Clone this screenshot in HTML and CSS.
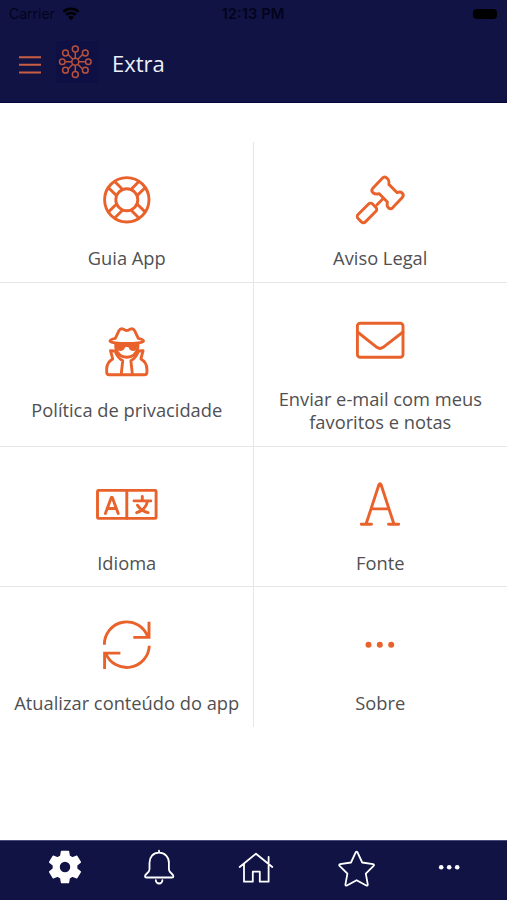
FILE: index.html
```html
<!DOCTYPE html>
<html lang="pt">
  <head>
    <meta charset="UTF-8" />
    <meta name="viewport" content="width=device-width, initial-scale=1.0" />
    <title>Extra</title>
    <link rel="stylesheet" href="styles.css">
  </head>
  <body>
    <header class="header">
      <div class="status">
        <div class="carrier">
          <span>Carrier</span>
          <svg width="18" height="14" viewBox="0 0 18 14">
            <path d="M1.5 4.8a11 11 0 0 1 15 0M4.2 7.9a7 7 0 0 1 9.6 0" fill="none" stroke="#000" stroke-width="2.5" />
            <path d="M9 13.2L6.2 10.2a4 4 0 0 1 5.6 0z" />
          </svg>
        </div>
        <div class="time">12:13 PM</div>
        <div class="battery"><i></i></div>
      </div>
      <div class="title-bar">
        <svg class="menu-icon" width="22" height="20" viewBox="0 0 22 20">
          <path d="M0 2.3h22M0 9.8h22M0 17.4h22" />
        </svg>
        <svg class="logo" width="42" height="42" viewBox="0 0 42 42">
          <rect width="42" height="42" fill="#0e1043" />
          <g class="logo-lines">
            <circle cx="19.3" cy="20.7" r="3.5" />
            <path d="M19.3 17.2v-6M19.3 24.2v6M15.8 20.7h-6M22.8 20.7h6M16.8 18.2l-5-5M21.8 18.2l5-5M16.8 23.2l-5 5M21.8 23.2l5 5" />
            <circle cx="19.3" cy="8" r="3" />
            <circle cx="19.3" cy="33.4" r="3" />
            <circle cx="6.3" cy="20.7" r="2.8" />
            <circle cx="32.3" cy="20.7" r="2.8" />
            <circle cx="9.5" cy="12" r="2.9" />
            <circle cx="29.3" cy="12" r="2.9" />
            <circle cx="9.5" cy="29.2" r="2.9" />
            <circle cx="29.3" cy="29.2" r="2.9" />
          </g>
        </svg>
        <h1>Extra</h1>
      </div>
    </header>

    <main class="content">
      <div class="grid">
        <div class="item">
          <svg class="icon" viewBox="0 0 64 64">
            <circle cx="31.8" cy="31.8" r="22.2" />
            <circle cx="31.8" cy="31.8" r="11" />
            <path d="M21.3 27.4L14 20.2M27.4 21.3L20.2 14M36.2 21.3l7.2-7.3M42.3 27.4l7.3-7.2M42.3 36.2l7.3 7.2M36.2 42.3l7.2 7.3M27.4 42.3L20.2 49.6M21.3 36.2l-7.3 7.2" />
          </svg>
          <p>Guia App</p>
        </div>
        <div class="item">
          <svg class="icon" viewBox="0 0 64 64">
            <path d="M24.6 20.6L34.3 10.2Q36.7 7.7 39 10.2L40.1 11.3Q41.5 13 40.9 16.4L49.2 24.7Q52.3 23.3 54.2 25.1Q56.3 27.3 54.3 29.5L44.8 39.6Q42.5 41.8 40.3 39.6Q38.4 37.5 39.4 34.1L31 25.6Q27.5 26.7 25.2 25Q22.8 22.8 24.6 20.6z" />
            <path d="M35 30.7l-6 6" />
            <rect x="-9.7" y="-5.2" width="20.5" height="10.4" rx="2.8" transform="translate(18.6 45.3) rotate(-45)" />
          </svg>
          <p>Aviso Legal</p>
        </div>
        <div class="item">
          <svg class="icon" viewBox="0 0 64 64">
            <path d="M20.3 18.3L24 10.6Q25.5 8 28 9L30 10.1Q31.8 10.8 33.6 10.1L35.6 9Q38.1 8 39.6 10.6L43.3 18.3Q48.5 19.5 48.5 21C48.5 24.4 15 24.4 15 21Q15 19.5 20.3 18.3z" />
            <path d="M20.8 24v3.8c1.5 6.3 6 9.4 11 9.4s9.5-3.1 11-9.4V24" />
            <path class="fill" d="M21 23c6 1.3 15.6 1.3 21.6 0l-1.1 5.4c-.6 3.4-6.2 3.4-7.5-.2l-.8-1.2h-2.8l-.8 1.2c-1.3 3.6-6.9 3.6-7.5.2z" />
            <path d="M20.2 31l-4.7-.3 2.2 8.2c-4 2.2-6 5.8-6 10.2v3.1q0 2.5 2.5 2.5h35.2q2.5 0 2.5-2.5v-3.1c0-4.4-2-8-6-10.2l2.2-8.2-4.7.3c-1.2 4.8-4.3 7.8-7.5 9.8l1.5 13.6M20.2 31c1.2 4.8 4.3 7.8 7.5 9.8l-1.5 13.6" />
          </svg>
          <p>Política de privacidade</p>
        </div>
        <div class="item">
          <svg class="icon" viewBox="0 0 64 64">
            <rect x="9.4" y="14.3" width="45.6" height="34" rx="2.8" />
            <path d="M9.5 23l19.4 15.3q3.1 2.2 6.2 0L55 23" />
          </svg>
          <p>Enviar e-mail com meus favoritos e notas</p>
        </div>
        <div class="item">
          <svg class="icon" viewBox="0 0 64 64">
            <rect x="2.5" y="17.4" width="58.6" height="28" rx="1" />
            <path d="M31.8 17.4v28M10.4 40.5l5.9-16h1l5.9 16M12.3 35.5h9M39 27.9h16.8M47.3 23.5v4M52.3 28.7c-1 5.5-5.5 9.3-10.6 11M42.5 32.2c2.3 3.8 6 6.4 10.6 7.5" />
          </svg>
          <p>Idioma</p>
        </div>
        <div class="item">
          <svg class="icon" viewBox="0 0 64 64">
            <path d="M18 51.3L30.9 11.8q1.1-2 2.2 0L46 51.3M23.2 35.9h17.6M13.3 51.3h10.2M40.5 51.3h10.2" />
          </svg>
          <p>Fonte</p>
        </div>
        <div class="item">
          <svg class="icon" viewBox="0 0 64 64">
            <path class="flat" d="M9.4 31.8a22.3 22.3 0 0 1 43.5-7.5M54 8.7v15.7H38.3M54.3 32.8a22.6 22.6 0 0 1-43.6 7.4M9.6 55.9V40.1h15.8" />
          </svg>
          <p>Atualizar conteúdo do app</p>
        </div>
        <div class="item">
          <svg class="icon" viewBox="0 0 64 64">
            <g class="dots">
              <circle cx="20.5" cy="31.7" r="3" />
              <circle cx="31.8" cy="31.7" r="3" />
              <circle cx="43.2" cy="31.7" r="3" />
            </g>
          </svg>
          <p>Sobre</p>
        </div>
      </div>
    </main>

    <nav class="tabs">
      <svg viewBox="0 0 40 40">
        <path fill="#fff" fill-rule="evenodd" stroke="#fff" stroke-width="1.5" stroke-linejoin="round" d="M16.6 4.5h6.8l.8 4.6 3.2 1.9 4.4-1.7 3.5 5.9-3.7 3v3.6l3.7 3-3.5 5.9-4.4-1.7-3.2 1.9-.8 4.6h-6.8l-.8-4.6-3.2-1.9-4.4 1.7-3.5-5.9 3.7-3v-3.6l-3.7-3 3.5-5.9 4.4 1.7 3.2-1.9zM20 14a6 6 0 1 0 0 12 6 6 0 0 0 0-12z" />
      </svg>
      <svg viewBox="0 0 40 40">
        <path d="M20 3.7v2M20 5.7c-6 0-9.5 4.3-9.5 10v6.5c0 3.5-4.5 4.8-4.5 7q0 1.3 1.5 1.3h25.4q1.5 0 1.5-1.3c0-2.2-4.5-3.5-4.5-7v-6.5c0-5.7-3.9-10-9.9-10zM16.8 33.2a3.3 3.3 0 0 0 6.6 0" />
      </svg>
      <svg viewBox="0 0 40 40">
        <path d="M3.7 20L20 6.7 36.3 20M8 17v17.7h8.8V24.7h7v10h8.8V9.8" />
      </svg>
      <svg viewBox="0 0 40 40">
        <path d="M19.8 5.2q.8-1.3 1.6 0l4.8 10.3 10.8 1.6q1.6.5.6 1.7L29.8 26.6l2 11q0 1.5-1.5.9L20.6 33.2 10.9 38.5q-1.5.6-1.5-.9l2-11L3.6 18.8q-1-1.2.6-1.7L15 15.5z" />
      </svg>
      <svg viewBox="0 0 40 40">
        <g fill="#fff" stroke="none">
          <circle cx="12.2" cy="20.3" r="2.3" />
          <circle cx="20.2" cy="20.3" r="2.3" />
          <circle cx="28.2" cy="20.3" r="2.3" />
        </g>
      </svg>
    </nav>
  </body>
</html>
```
FILE: styles.css
```css
* {
  box-sizing: border-box;
}
body {
  margin: 0;
  height: 900px;
  display: flex;
  flex-direction: column;
  font-family: "Open Sans", "Noto Sans", sans-serif;
  background: #fff;
  color: #505052;
}

.header {
  height: 103px;
  background: #111345;
  border-bottom: 1px solid #03043a;
}
.status {
  height: 27px;
  padding: 0 10px 0 9px;
  display: grid;
  grid-template-columns: 1fr auto 1fr;
  align-items: center;
  font-family: Inter, "Liberation Sans", sans-serif;
  font-size: 14px;
  color: #03041c;
}
.carrier {
  display: flex;
  align-items: center;
  gap: 7px;
}
.time {
  font-size: 14.8px;
  font-weight: 600;
}
.battery {
  display: flex;
  justify-content: flex-end;
}
.battery i {
  width: 24px;
  height: 10px;
  border-radius: 4px;
  background: #000;
}
.title-bar {
  display: flex;
  align-items: center;
  height: 74px;
  padding-left: 19px;
}
.menu-icon {
  margin-top: 2px;
  stroke: #c95f42;
  stroke-width: 2;
}
.logo {
  margin: -4px 0 0 15px;
}
.logo-lines {
  fill: none;
  stroke: #b8503b;
  stroke-width: 1.5;
}
h1 {
  margin: -3px 0 0 14px;
  font-size: 22px;
  font-weight: 400;
  color: #eef0fa;
}

.content {
  flex: 1;
  padding-top: 39px;
}
.grid {
  display: grid;
  grid-template-columns: 1fr 1fr;
}
.item {
  display: flex;
  flex-direction: column;
  align-items: center;
  justify-content: center;
  padding: 26px 5px 12px;
  border-bottom: 1px solid #e6e6e8;
  text-align: center;
}
.item:nth-child(odd) {
  padding-left: 6px;
  border-right: 1px solid #e6e6e8;
}
.item:nth-last-child(-n + 2) {
  border-bottom: 0;
}
.item p {
  margin: 14px 0 0;
  font-size: 18.3px;
  line-height: 23.5px;
}
.icon {
  width: 64px;
  height: 64px;
  fill: none;
  stroke: #e9622b;
  stroke-width: 2.9;
  stroke-linecap: round;
  stroke-linejoin: round;
}
.icon .flat {
  stroke-linecap: butt;
  stroke-linejoin: miter;
}
.icon .dots,
.icon .fill {
  fill: #e9622b;
  stroke: none;
}

.tabs {
  height: 60px;
  padding: 6px 0 0 45px;
  display: grid;
  grid-template-columns: 94px 97px 100px 93px 40px;
  background: #111345;
  border-top: 1px solid #4a4b78;
}
.tabs svg {
  width: 40px;
  height: 40px;
  fill: none;
  stroke: #fff;
  stroke-width: 1.8;
  stroke-linejoin: round;
  stroke-linecap: round;
}
```
